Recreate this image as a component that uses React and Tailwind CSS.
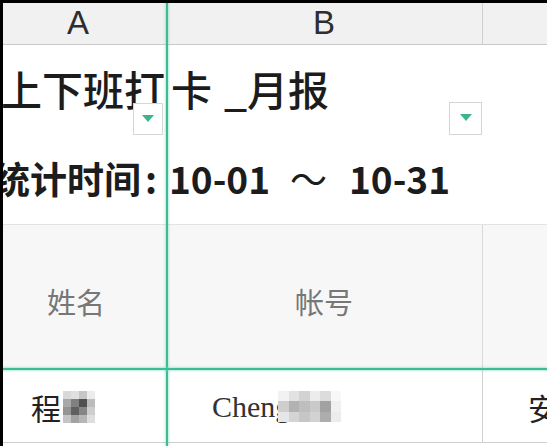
import React from "react";

const cjk = { fontFamily: '"Noto Sans CJK SC", "Noto Sans", sans-serif' };
const latin = { fontFamily: '"Liberation Sans", Arial, sans-serif' };
const serif = { fontFamily: '"Liberation Serif", "Times New Roman", serif' };

function Mosaic({ cols, size, colors }) {
  return (
    <div className="grid" style={{ gridTemplateColumns: `repeat(${cols}, ${size}px)`, gridAutoRows: `${size}px` }}>
      {colors.map((c, i) => (
        <div key={i} style={{ background: c }} />
      ))}
    </div>
  );
}

function FilterBtn({ className }) {
  return (
    <div className={`absolute flex h-[32px] w-[30px] items-start justify-center border border-[#d6d6d6] bg-white pt-[11px] ${className}`}>
      <div className="h-0 w-0 border-x-[6px] border-t-[7px] border-x-transparent border-t-[#3bb48f]" />
    </div>
  );
}

export default function App() {
  return (
    <div className="h-[446px] w-[547px] overflow-hidden bg-black pl-[3px] pt-[3px]">
      <div className="relative h-[443px] w-[544px] overflow-hidden bg-white">
        {/* column header */}
        <div className="grid h-[42px] grid-cols-[163px_317px_1fr] border-b border-[#c9c9c9] bg-[#f1f1f1] text-[#2e2e2e]" style={latin}>
          <div className="flex items-center justify-center pb-[3px] pr-[13px] text-[33px] leading-none">A</div>
          <div className="flex items-center justify-center border-r border-[#cfcfcf] pb-[3px] text-[33px] leading-none">B</div>
          <div />
        </div>

        {/* title row */}
        <div className="grid h-[92px] grid-cols-[163px_317px_1fr]">
          <div className="relative">
            <div className="ml-[-2px] whitespace-nowrap pt-[23px] text-[41px] font-medium leading-none text-[#1c1c1c]" style={cjk}>
              上下班打<span className="ml-[6px]">卡</span>
              <span className="inline-block w-[35px] text-right">_</span>月报
            </div>
            <FilterBtn className="bottom-[2px] right-[3px]" />
          </div>
          <div className="relative">
            <FilterBtn className="bottom-[2px] right-[1px] h-[33px] w-[33px]" />
          </div>
          <div />
        </div>

        {/* stats row */}
        <div className="h-[87px] pt-[23px]">
          <div className="ml-[-10px] flex items-center whitespace-nowrap text-[37px] font-bold leading-none text-[#1c1c1c]" style={cjk}>
            <span>统计时间</span>
            <span className="ml-[4px] w-[22px]">:</span>
            <span className="ml-[2px]">10-01</span>
            <span className="ml-[20px] font-normal">～</span>
            <span className="ml-[22px]">10-31</span>
          </div>
        </div>

        {/* header row */}
        <div className="grid h-[145px] grid-cols-[163px_317px_1fr] border-t border-[#e3e3e3] bg-[#f7f7f7] text-[29px] leading-none text-[#777]" style={cjk}>
          <div className="flex items-center justify-center pr-[17px] pt-[8px]">姓名</div>
          <div className="flex items-center justify-center border-r border-[#d8d8d8] pt-[8px]">帐号</div>
          <div />
        </div>

        {/* data row */}
        <div className="grid h-[74px] grid-cols-[163px_317px_1fr] border-b border-[#cfcfcf] text-[#222]">
          <div className="flex items-center pl-[28px] pt-[2px]">
            <span className="text-[30px] leading-none" style={cjk}>程</span>
            <div className="ml-[2px]">
              <Mosaic
                cols={4}
                size={8}
                colors={[
                  "#d8d8d8", "#e0e0e0", "#c6c6c6", "#ececec",
                  "#a8a8a8", "#808080", "#505050", "#bcbcbc",
                  "#949494", "#606060", "#868686", "#cecece",
                  "#c4c4c4", "#a2a2a2", "#b6b6b6", "#dedede",
                ]}
              />
            </div>
          </div>
          <div className="flex items-center border-r border-[#d0d0d0] pl-[46px] pt-[2px]">
            <span className="text-[30px] leading-none text-[#333]" style={serif}>Cheng</span>
            <div className="ml-[-12px]">
              <Mosaic
                cols={6}
                size={10.5}
                colors={[
                  "#f2f2f2", "#e2e2e2", "#d2d2d2", "#ececec", "#dcdcdc", "#f8f8f8",
                  "#cecece", "#b2b2b2", "#bebebe", "#cacaca", "#a2a2a2", "#f0f0f0",
                  "#e6e6e6", "#d4d4d4", "#c6c6c6", "#d2d2d2", "#adadad", "#ececec",
                ]}
              />
            </div>
          </div>
          <div className="flex items-center pl-[45px] pt-[2px]">
            <span className="text-[30px] leading-none" style={cjk}>安</span>
          </div>
        </div>

        {/* selection lines (overlay) */}
        <div className="pointer-events-none absolute bottom-0 left-[163px] top-0 w-[2px] bg-[#3dbb96] shadow-[0_0_2px_1px_rgba(120,215,185,0.5)]" />
        <div className="pointer-events-none absolute left-0 right-0 top-[365px] h-[2px] bg-[#3dbb96] shadow-[0_0_2px_1px_rgba(120,215,185,0.5)]" />
      </div>
    </div>
  );
}
